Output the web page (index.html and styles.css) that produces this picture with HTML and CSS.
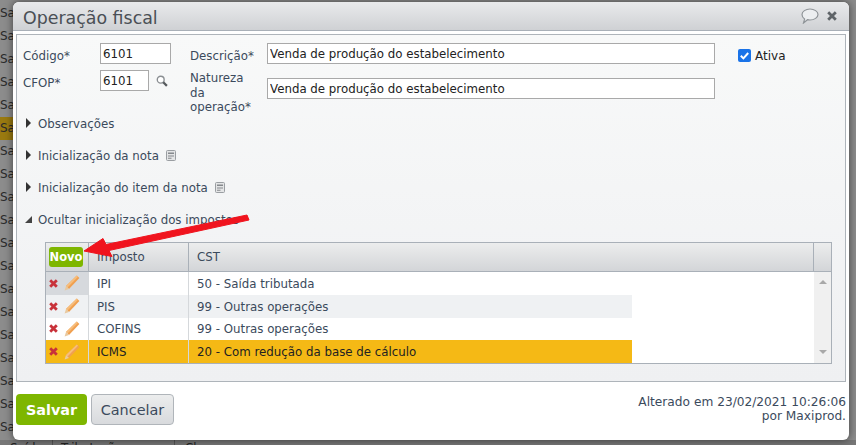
FILE: index.html
```html
<!DOCTYPE html>
<html lang="pt">
<head>
<meta charset="utf-8">
<title>Operação fiscal</title>
<link rel="stylesheet" href="styles.css">
</head>
<body>
<div class="backdrop">
  <div class="bg-row">Sai</div><div class="bg-row">Sai</div><div class="bg-row">Sai</div><div class="bg-row">Sai</div><div class="bg-row">Sai</div><div class="bg-row bg-sel">Sai</div><div class="bg-row">Sai</div><div class="bg-row">Sai</div><div class="bg-row">Sai</div><div class="bg-row">Sai</div><div class="bg-row">Sai</div><div class="bg-row">Sai</div><div class="bg-row">Sai</div><div class="bg-row">Sai</div><div class="bg-row">Sai</div><div class="bg-row">Sai</div><div class="bg-row">Sai</div><div class="bg-row">Sai</div><div class="bg-row">Sai</div>
</div>
<div class="bg-bottom"><span class="b1">Saída</span><span class="b2">Tributação</span><span class="b3">Chave</span></div>
<section class="dialog">
  <header class="titlebar">
    <h1>Operação fiscal</h1>
    <div class="title-icons">
      <svg class="ic-bubble" viewBox="0 0 18 16" width="18" height="16"><path d="M9 1c4.300 0 8 2.500 8 5.500S13.300 12 9 12c-.9 0-1.700-.1-2.500-.3L2.500 15l1.100-3.900C1.900 10 1 8.400 1 6.500 1 3.500 4.700 1 9 1z" fill="#eceef0" stroke="#8f9498" stroke-width="1.200"/></svg>
      <svg class="ic-close" viewBox="0 0 10 10" width="10" height="10"><path d="M1.200 1.200l7.600 7.600M8.800 1.200L1.200 8.800" stroke="#5f6468" stroke-width="2.800"/></svg>
    </div>
  </header>
  <div class="panel">
    <div class="form">
      <div class="col-a">
        <div class="field"><label>Código*</label><input class="inp w-code" value="6101"></div>
        <div class="field f2"><label>CFOP*</label><input class="inp w-cfop" value="6101">
          <svg class="ic-search" viewBox="0 0 14 14" width="12" height="12"><circle cx="5.500" cy="5.500" r="4" fill="#fff" stroke="#8a8e92" stroke-width="1.600"/><path d="M8.500 8.500l4.200 4.200" stroke="#55595c" stroke-width="2.600"/></svg>
        </div>
      </div>
      <div class="col-b">
        <div class="field"><label class="lab-b">Descrição*</label><input class="inp w-long" value="Venda de produção do estabelecimento"></div>
        <div class="field f3"><label class="lab-b">Natureza<br>da<br>operação*</label><input class="inp w-long" value="Venda de produção do estabelecimento"></div>
      </div>
      <div class="col-c"><span class="check"><svg viewBox="0 0 13 13" width="13" height="13"><rect width="13" height="13" rx="2" fill="#1a73e8"/><path d="M2.800 6.800l2.600 2.600 4.800-5.400" fill="none" stroke="#fff" stroke-width="2"/></svg></span><span>Ativa</span></div>
    </div>
    <ul class="sections">
      <li><i class="tri"></i>Observações</li>
      <li><i class="tri"></i>Inicialização da nota<svg class="ic-doc" viewBox="0 0 10 11" width="10" height="11"><rect x=".5" y=".5" width="9" height="10" rx="1" fill="#e4e5e6" stroke="#9a9ea2"/><path d="M2 2.500h6v1.500H2zM2 5.500h6v1H2zM2 7.800h3.500v1H2z" fill="#85898d"/></svg></li>
      <li><i class="tri"></i>Inicialização do item da nota<svg class="ic-doc" viewBox="0 0 10 11" width="10" height="11"><rect x=".5" y=".5" width="9" height="10" rx="1" fill="#e4e5e6" stroke="#9a9ea2"/><path d="M2 2.500h6v1.500H2zM2 5.500h6v1H2zM2 7.800h3.500v1H2z" fill="#85898d"/></svg></li>
      <li><i class="tri open"></i>Ocultar inicialização dos impostos</li>
    </ul>
    <div class="grid">
      <div class="g-head">
        <div class="c-act"><button class="novo">Novo</button></div>
        <div class="c-imp">Imposto</div>
        <div class="c-cst">CST</div>
        <div class="c-end"></div>
      </div>
      <div class="g-body">
        <div class="g-rows">
          <div class="row"><div class="c-act act-first"><svg class="ic-x" viewBox="0 0 9 9" width="9" height="9"><path d="M1.200 1.200l6.600 6.600M7.800 1.200L1.200 7.800" stroke="#c8323a" stroke-width="2.800"/></svg><svg class="ic-pen" viewBox="0 0 16 16" width="16" height="16"><path d="M12.800 .6l2.600 2.400L5 14 2 11z" fill="#f0a050"/><path d="M12.800 .6l1.200 1.100L3.500 12.500 2 11z" fill="#f6bd7c"/><path d="M2 11l3 3-4.400 1.500z" fill="#e8c9a0"/></svg></div><div class="c-imp">IPI</div><div class="c-cst">50 - Saída tributada</div></div>
          <div class="row alt"><div class="c-act"><svg class="ic-x" viewBox="0 0 9 9" width="9" height="9"><path d="M1.200 1.200l6.600 6.600M7.800 1.200L1.200 7.800" stroke="#c8323a" stroke-width="2.800"/></svg><svg class="ic-pen" viewBox="0 0 16 16" width="16" height="16"><path d="M12.800 .6l2.600 2.400L5 14 2 11z" fill="#f0a050"/><path d="M12.800 .6l1.200 1.100L3.500 12.500 2 11z" fill="#f6bd7c"/><path d="M2 11l3 3-4.400 1.500z" fill="#e8c9a0"/></svg></div><div class="c-imp">PIS</div><div class="c-cst">99 - Outras operações</div></div>
          <div class="row"><div class="c-act"><svg class="ic-x" viewBox="0 0 9 9" width="9" height="9"><path d="M1.200 1.200l6.600 6.600M7.800 1.200L1.200 7.800" stroke="#c8323a" stroke-width="2.800"/></svg><svg class="ic-pen" viewBox="0 0 16 16" width="16" height="16"><path d="M12.800 .6l2.600 2.400L5 14 2 11z" fill="#f0a050"/><path d="M12.800 .6l1.200 1.100L3.500 12.500 2 11z" fill="#f6bd7c"/><path d="M2 11l3 3-4.400 1.500z" fill="#e8c9a0"/></svg></div><div class="c-imp">COFINS</div><div class="c-cst">99 - Outras operações</div></div>
          <div class="row sel"><div class="c-act"><svg class="ic-x" viewBox="0 0 9 9" width="9" height="9"><path d="M1.200 1.200l6.600 6.600M7.800 1.200L1.200 7.800" stroke="#c8323a" stroke-width="2.800"/></svg><svg class="ic-pen" viewBox="0 0 16 16" width="16" height="16"><path d="M12.800 .6l2.600 2.400L5 14 2 11z" fill="#f0a050"/><path d="M12.800 .6l1.200 1.100L3.500 12.500 2 11z" fill="#f6bd7c"/><path d="M2 11l3 3-4.400 1.500z" fill="#e8c9a0"/></svg></div><div class="c-imp">ICMS</div><div class="c-cst">20 - Com redução da base de cálculo</div></div>
        </div>
        <div class="scroll"><i class="s-up"></i><i class="s-down"></i></div>
      </div>
    </div>
  </div>
  <footer class="foot">
    <div class="buttons"><button class="salvar">Salvar</button><button class="cancelar">Cancelar</button></div>
    <div class="stamp">Alterado em 23/02/2021 10:26:06<br>por Maxiprod.</div>
  </footer>
</section>
<svg class="arrow" viewBox="0 0 856 445" width="856" height="445"><path d="M84 251L103 238.500 106 244.500 247 215 249 220 109 250.500 112 256.500z" fill="#f0141e" stroke="#f0141e" stroke-width="1" stroke-linejoin="round"/></svg>
</body>
</html>
```
FILE: styles.css
```css
* { box-sizing: border-box; }
html, body { margin: 0; padding: 0; width: 856px; height: 445px; overflow: hidden; }
body { position: relative; background: #8c8c8c; font-family: "DejaVu Sans", Verdana, sans-serif; font-size: 11.8px; color: #3b4a5c; }
.backdrop { width: 13px; overflow: hidden; padding-top: 2px; }
.bg-row { height: 23px; line-height: 23px; color: #2a2a2a; font-size: 12px; white-space: nowrap; margin-left: -2px; padding-left: 2px; }
.bg-sel { background: #9a7a10; }
.bg-bottom { position: absolute; left: 0; top: 440px; width: 856px; height: 5px; display: flex; color: #222; line-height: 14px; background: #777; overflow: hidden; }
.b1 { width: 53px; border-right: 1px solid #555; padding: 1px 0 0 10px; }
.b2 { width: 122px; border-right: 1px solid #555; padding: 1px 0 0 8px; }
.b3 { padding: 1px 0 0 10px; }
.dialog { position: absolute; left: 13px; top: 2px; width: 836px; height: 438px; background: #fff; border-radius: 6px; box-shadow: 0 0 8px rgba(0,0,0,.55); display: flex; flex-direction: column; }
.titlebar { height: 29px; flex: none; display: flex; justify-content: space-between; align-items: center; padding: 0 10px; background: linear-gradient(#e9eaec, #cfd1d4); border-radius: 6px 6px 0 0; border-bottom: 1px solid #a9b0b8; }
h1 { margin: 3px 0 0; font-size: 17.4px; font-weight: 400; color: #4a4f55; }
.title-icons { display: flex; align-items: center; gap: 8px; padding-right: 2px; }
.panel { flex: none; margin: 3px 3px 0 3px; height: 348px; border: 1px solid #aeb4ba; background: linear-gradient(#f8f9f9, #eff0f2); padding: 8px 0 0 6px; }
.form { display: flex; height: 64px; }
.field { display: flex; align-items: center; }
.col-a { width: 167px; }
.col-a label { width: 77px; padding-top: 4px; }
.f2 { margin-top: 6px; }
.lab-b { width: 77px; }
.col-b .field:first-child .lab-b { padding-top: 4px; }
.col-b .f3 { margin-top: 6px; align-items: flex-start; }
.f3 .lab-b { line-height: 14.5px; padding-top: 1px; }
.f3 .inp { margin-top: 8px; }
.inp { font: inherit; color: #222; height: 21px; border: 1px solid #a9a9a9; background: #fff; padding: 1px 2px 0; outline: none; }
.w-code { width: 71px; }
.w-cfop { width: 49px; }
.ic-search { margin-left: 7px; }
.w-long { width: 448px; }
.col-c { display: flex; align-items: center; height: 25px; margin-left: 23px; color: #222; gap: 4px; font-size: 12px; }
.check { display: flex; }
.sections { list-style: none; margin: 0; padding: 0; }
.sections li { height: 32px; display: flex; align-items: center; padding-top: 1px; }
.tri { width: 0; height: 0; border-left: 5px solid #333; border-top: 5px solid transparent; border-bottom: 5px solid transparent; margin: -2px 7px 0 3px; }
.tri.open { border-left: 7px solid transparent; border-top: 0; border-bottom: 7px solid #444; margin: -1px 6px 0 2px; }
.ic-doc { margin-left: 7px; }
.grid { margin: 7px 0 0 22px; width: 787px; border: 1px solid #a9b0b8; }
.g-head { display: flex; height: 29px; background: linear-gradient(#eceded, #d3d5d8); border-bottom: 1px solid #a9b0b8; align-items: stretch; }
.c-act { width: 43px; flex: none; border-right: 1px solid #a9b0b8; display: flex; align-items: center; padding-left: 3px; }
.c-imp { width: 100px; flex: none; border-right: 1px solid #a9b0b8; display: flex; align-items: center; padding-left: 8px; }
.c-cst { width: 443px; flex: none; display: flex; align-items: center; padding-left: 8px; }
.g-head .c-cst { flex: 1; width: auto; border-right: 1px solid #a9b0b8; }
.c-end { width: 17px; flex: none; }
.novo { width: 34px; height: 20px; padding: 0; border: 0; border-radius: 3px; background: #7eb600; color: #fff; font: 700 11.5px "DejaVu Sans", sans-serif; }
.g-body { display: flex; height: 91px; background: #fff; }
.g-rows { flex: 1; display: grid; grid-template-rows: repeat(4, 1fr); }
.row { display: flex; color: #3b4a5c; }
.row .c-act { border-right-color: #d5d8db; gap: 6px; }
.row .c-imp { border-right-color: #d5d8db; padding-top: 1px; }
.row .c-cst { padding-top: 1px; }
.act-first { background: #d6d9dd; }
.alt .c-imp, .alt .c-cst, .alt .c-act { background: #eff1f3; }
.sel .c-imp, .sel .c-cst, .sel .c-act { background: #f5b915; color: #222; }
.ic-pen { flex: none; }
.scroll { width: 17px; background: #f0f0f0; display: flex; flex-direction: column; justify-content: space-between; align-items: center; padding: 8px 0 9px; }
.s-up { border-left: 4px solid transparent; border-right: 4px solid transparent; border-bottom: 4px solid #a8a8a8; }
.s-down { border-left: 4px solid transparent; border-right: 4px solid transparent; border-top: 4px solid #a8a8a8; }
.foot { flex: 1; display: flex; justify-content: space-between; padding: 12px 3px 0 3px; }
.buttons { display: flex; gap: 4px; align-items: flex-start; }
.buttons button { height: 31px; border-radius: 4px; font-size: 14.4px; font-family: inherit; padding: 0; }
.salvar { width: 71px; border: 0; background: #7eb600; color: #fff; font-weight: 700; }
.cancelar { width: 83px; border: 1px solid #b0b5ba; background: linear-gradient(#eceded, #d8dadd); color: #3b4a5c; }
.stamp { text-align: right; line-height: 14px; font-size: 12.2px; padding-top: 1px; }
.arrow { position: absolute; left: 0; top: 0; pointer-events: none; }
```
